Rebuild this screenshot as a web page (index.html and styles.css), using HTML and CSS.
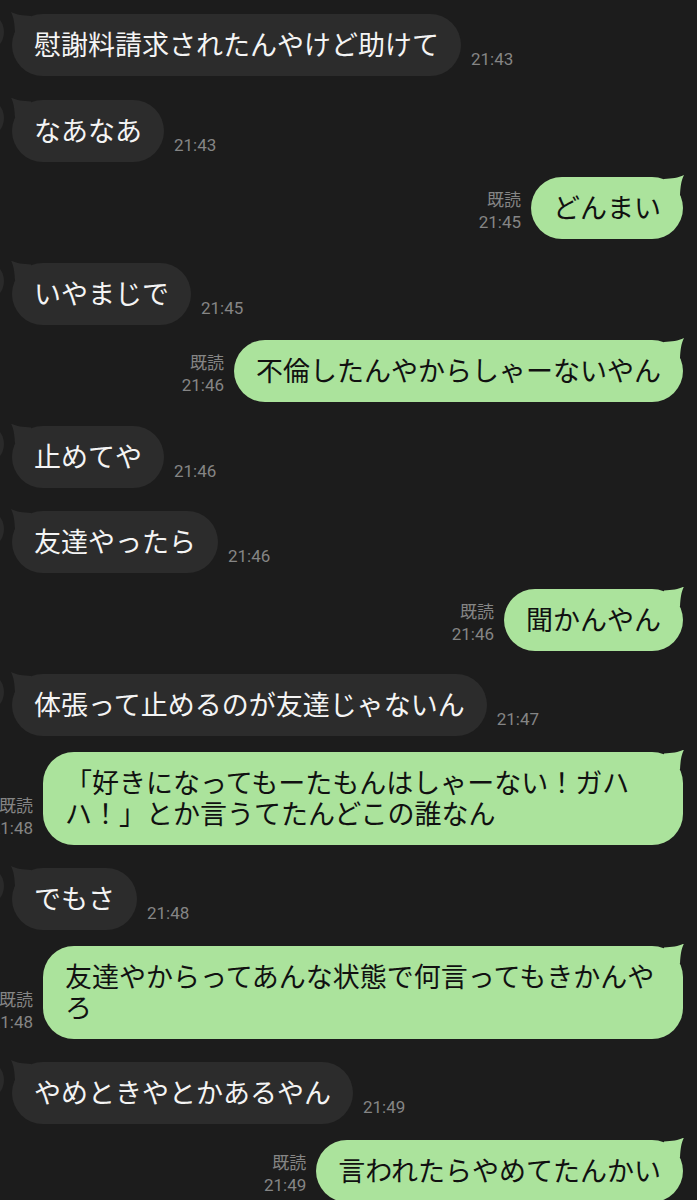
FILE: index.html
```html
<!DOCTYPE html>
<html lang="ja">
<head>
<meta charset="utf-8">
<title>LINE</title>
<link rel="stylesheet" href="styles.css">
</head>
<body>
<main class="chat">
  <div class="row in"><div class="bubble">慰謝料請求されたんやけど助けて</div><span class="time">21:43</span></div>
  <div class="row in"><div class="bubble">なあなあ</div><span class="time">21:43</span></div>
  <div class="row out"><span class="meta">既読<br>21:45</span><div class="bubble">どんまい</div></div>
  <div class="row in"><div class="bubble">いやまじで</div><span class="time">21:45</span></div>
  <div class="row out"><span class="meta">既読<br>21:46</span><div class="bubble">不倫したんやからしゃーないやん</div></div>
  <div class="row in"><div class="bubble">止めてや</div><span class="time">21:46</span></div>
  <div class="row in"><div class="bubble">友達やったら</div><span class="time">21:46</span></div>
  <div class="row out"><span class="meta">既読<br>21:46</span><div class="bubble">聞かんやん</div></div>
  <div class="row in"><div class="bubble">体張って止めるのが友達じゃないん</div><span class="time">21:47</span></div>
  <div class="row out"><span class="meta">既読<br>21:48</span><div class="bubble">「好きになってもーたもんはしゃーない！ガハハ！」とか言うてたんどこの誰なん</div></div>
  <div class="row in"><div class="bubble">でもさ</div><span class="time">21:48</span></div>
  <div class="row out"><span class="meta">既読<br>21:48</span><div class="bubble">友達やからってあんな状態で何言ってもきかんやろ</div></div>
  <div class="row in"><div class="bubble">やめときやとかあるやん</div><span class="time">21:49</span></div>
  <div class="row out"><span class="meta">既読<br>21:49</span><div class="bubble">言われたらやめてたんかい</div></div>
</main>
</body>
</html>
```
FILE: styles.css
```css
html, body {
  margin: 0;
  padding: 0;
  background: #1c1c1c;
  overflow: hidden;
}

.chat {
  display: flex;
  flex-direction: column;
  padding-top: 14px;
  font-family: "Noto Sans CJK JP", sans-serif;
}

.row {
  position: relative;
  display: flex;
  align-items: flex-end;
  gap: 10px;
}

.row.in {
  margin-top: 23.5px;
  justify-content: flex-start;
  padding-left: 12px;
}

.row.out {
  margin-top: 15.5px;
  justify-content: flex-end;
  padding-right: 14px;
}

.row:first-child {
  margin-top: 0;
}

.row.in::after {
  content: "";
  position: absolute;
  left: -36px;
  top: -2px;
  width: 40px;
  height: 40px;
  border-radius: 50%;
  background: #2a2a2a;
}

.bubble {
  position: relative;
  box-sizing: border-box;
  max-width: 640px;
  flex-shrink: 0;
  padding: 14px 22px 17px;
  border-radius: 31px;
  font-size: 27px;
  line-height: 31px;
  word-break: break-all;
}

.in .bubble {
  background: #2c2c2c;
  color: #f4f4f4;
}

.out .bubble {
  background: #abe39c;
  color: #111;
}

.bubble::before {
  content: "";
  position: absolute;
  top: -2px;
  width: 20px;
  height: 20px;
  background: inherit;
  clip-path: path('M0 0 C 6 3, 12 3.5, 20 4 L 20 20 L 4 20 C 3.5 12, 3 6, 0 0 Z');
}

.in .bubble::before {
  left: -1px;
}

.out .bubble::before {
  right: -1px;
  transform: scaleX(-1);
}

.time,
.meta {
  flex-shrink: 0;
  white-space: nowrap;
  font-family: "Roboto", "Noto Sans CJK JP", sans-serif;
  font-size: 17px;
  color: #858585;
  margin-bottom: 6px;
}

.time {
  line-height: 22px;
}

.meta {
  line-height: 22px;
  text-align: right;
}
```
